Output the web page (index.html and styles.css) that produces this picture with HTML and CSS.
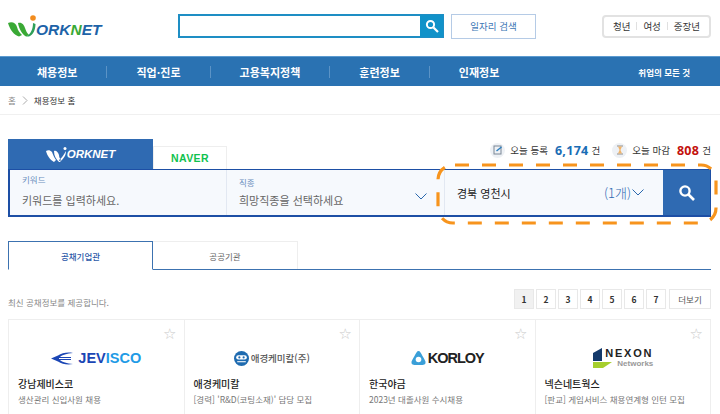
FILE: index.html
```html
<!DOCTYPE html>
<html lang="ko">
<head>
  <meta charset="UTF-8">
  <meta name="viewport" content="width=device-width, initial-scale=1.0">
  <title>워크넷 채용정보</title>
  <link rel="stylesheet" href="styles.css">
</head>
<body>
<header class="top">
  <a class="logo">
    <svg class="logo-mark" width="30" height="22" viewBox="0 0 30 22">
      <path d="M0 8 C4 6 8 8 9 12 C10 16 12 18 14 20 L11 21.5 C6 20 2 15 0 8Z" fill="#3aa935"/>
      <path d="M10 8 C14 7 16 10 17 13 C18 16 19 18 21 20 L18 21.5 C14 19 11 14 10 8Z" fill="#3aa935"/>
      <path d="M18 21.5 C23 19 25 14 25 8 L27.5 9 C27.5 15 25 20 21 21.5Z" fill="#2f9f58"/>
    </svg>
    <svg class="logo-dot" width="6" height="6" viewBox="0 0 6 6"><circle cx="3" cy="3" r="2.8" fill="#f28c1e"/></svg>
    <span class="logo-text">ORK<em>N</em>ET</span>
  </a>
  <div class="top-search">
    <div class="top-input"></div>
    <button class="top-btn">
      <svg width="14" height="14" viewBox="0 0 14 14" fill="none" stroke="#fff"><circle cx="5.5" cy="5.5" r="3.6" stroke-width="2"/><path d="M8.5 8.5 L13 13" stroke-width="2.2"/></svg>
    </button>
  </div>
  <a class="job-btn">일자리 검색</a>
  <div class="pills">
    <span>청년</span><i></i><span>여성</span><i></i><span>중장년</span>
  </div>
</header>

<nav class="gnb">
  <a>채용정보</a>
  <a>직업·진로</a>
  <a>고용복지정책</a>
  <a>훈련정보</a>
  <a class="last">인재정보</a>
  <span class="gnb-all">취업의 모든 것</span>
</nav>

<div class="crumb">
  <span>홈</span>
  <svg width="6" height="9" viewBox="0 0 6 9" fill="none" stroke="#aaa"><path d="M1 .5 L5 4.5 L1 8.5"/></svg>
  <b>채용정보 홈</b>
</div>

<main class="content">
  <div class="search-head">
    <div class="engine-tabs">
      <div class="engine on">
        <svg width="22" height="15" viewBox="0 0 22 15"><path d="M0 4 C2 3 4 3 6 5 C7 8 8 10 10 13 L8 15 C4 13 1 8 0 4Z M8 4 C10 3 12 5 13 8 C13 10 14 12 15 13 L13 15 C10 12 8 9 8 4Z M14 15 C17 12 20 9 20 4 C18 7 16 11 13 13Z" fill="#fff"/><circle cx="19" cy="1.5" r="1.5" fill="#fff"/></svg>
        <span>ORKNET</span>
      </div>
      <div class="engine naver">NAVER</div>
    </div>
    <div class="today">
      <span class="ico">
        <svg width="10" height="10" viewBox="0 0 10 10" fill="none"><rect x="1" y="1" width="7" height="8" stroke="#7a8796"/><path d="M3.5 6 L8.5 2" stroke="#2a7fc0" stroke-width="1.5"/></svg>
      </span>
      <span>오늘 등록</span><b class="blue">6,174</b><span>건</span>
      <span class="ico second">
        <svg width="10" height="10" viewBox="0 0 10 10" fill="none"><path d="M2 1 H8 M2 9 H8" stroke="#8d8d8d"/><path d="M3 1.5 H7 L5.5 5 L7 8.5 H3 L4.5 5Z" fill="#f2b56b"/></svg>
      </span>
      <span>오늘 마감</span><b class="red">808</b><span>건</span>
    </div>
  </div>

  <div class="search-box">
    <div class="field kw">
      <label>키워드</label>
      <p>키워드를 입력하세요.</p>
    </div>
    <div class="field job">
      <label>직종</label>
      <p>희망직종을 선택하세요</p>
      <svg class="chev" width="12" height="7" viewBox="0 0 12 7" fill="none" stroke="#2a68ae"><path d="M.5 .5 L6 6 L11.5 .5"/></svg>
    </div>
    <div class="field area">
      <strong>경북 영천시</strong>
      <span class="count">(1개)</span>
      <svg width="12" height="7" viewBox="0 0 12 7" fill="none" stroke="#2a68ae"><path d="M.5 .5 L6 6 L11.5 .5"/></svg>
    </div>
    <button class="go">
      <svg width="17" height="17" viewBox="0 0 17 17" fill="none" stroke="#fff"><circle cx="7" cy="7" r="4.6" stroke-width="2.4"/><path d="M10.5 10.5 L16 16" stroke-width="2.6"/></svg>
    </button>
    <svg class="dash" width="282" height="62" viewBox="0 0 282 62" fill="none"><rect x="2" y="2" width="278" height="58" rx="15" stroke="#f7941d" stroke-width="3.2" stroke-dasharray="14 13" stroke-dashoffset="-2"/></svg>
  </div>

  <div class="tabs">
    <a class="tab on">공채기업관</a>
    <a class="tab">공공기관</a>
  </div>

  <div class="list-head">
    <p>최신 공채정보를 제공합니다.</p>
    <div class="pager">
      <a class="on">1</a><a>2</a><a>3</a><a>4</a><a>5</a><a>6</a><a>7</a><a class="more">더보기</a>
    </div>
  </div>

  <div class="cards">
    <article class="card">
      <span class="star">☆</span>
      <div class="brand">
        <svg width="22" height="13" viewBox="0 0 22 13" fill="none"><path d="M0 6.5 L7 3.5 C11 1 16 0 22 1 C16 1.5 11 3 9 5 L20 5 L20 6 L8 6 L8 7 L20 7 L20 8 L9 8 C11 10 16 11.5 22 12 C16 13 11 12 7 9.5Z" fill="#1b46b5"/></svg>
        <span class="jev">JEV<em>ISCO</em></span>
      </div>
      <h3>강남제비스코</h3>
      <p>생산관리 신입사원 채용</p>
    </article>
    <article class="card">
      <span class="star">☆</span>
      <div class="brand tight">
        <svg width="15" height="15" viewBox="0 0 14 14"><circle cx="7" cy="7" r="7" fill="#1f6bb0"/><rect x="2" y="4" width="10" height="4" rx="2" fill="#fff"/><circle cx="5" cy="6" r="1" fill="#1f6bb0"/><circle cx="9" cy="6" r="1" fill="#1f6bb0"/><path d="M3 10 H11" stroke="#fff"/></svg>
        <span class="aek">애경케미칼(주)</span>
      </div>
      <h3>애경케미칼</h3>
      <p>[경력] 'R&amp;D(코팅소재)' 담당 모집</p>
    </article>
    <article class="card">
      <span class="star">☆</span>
      <div class="brand tight">
        <svg width="15" height="14" viewBox="0 0 15 14"><path d="M7.5 0 C9 0 10 2 11.5 5 C13 8 15 10 14.5 12 C14 14 12 14 7.5 14 C3 14 1 14 .5 12 C0 10 2 8 3.5 5 C5 2 6 0 7.5 0Z" fill="#3a9fd8"/><circle cx="7.5" cy="8.5" r="2.8" fill="#fff"/></svg>
        <span class="kor">KORLOY</span>
      </div>
      <h3>한국야금</h3>
      <p>2023년 대졸사원 수시채용</p>
    </article>
    <article class="card">
      <span class="star">☆</span>
      <div class="brand">
        <svg class="nex-mark" width="20" height="20" viewBox="0 0 20 20"><path d="M10 0 L10 13 L1 13 L1 5Z" fill="#143a6b"/><path d="M1 14 L20 14 L11 20 L1 20Z" fill="#a6cf2e"/></svg>
        <div class="nex"><b>NEXON</b><span>Networks</span></div>
      </div>
      <h3>넥슨네트웍스</h3>
      <p>[판교] 게임서비스 채용연계형 인턴 모집</p>
    </article>
  </div>
</main>
</body>
</html>
```

FILE: styles.css
```css
* {
  box-sizing: border-box;
}

html, body {
  height: 414px;
}

body {
  margin: 0;
  overflow: hidden;
  font-family: "Noto Sans CJK KR", "Noto Sans", sans-serif;
  color: #333;
  background: #fff;
}

p, h3 {
  margin: 0;
}

/* header */
.top {
  height: 56px;
  display: flex;
  align-items: center;
  padding: 0 9px 4px 8px;
}

.logo {
  position: relative;
  width: 170px;
  display: flex;
  align-items: flex-end;
  height: 22px;
}

.logo-dot {
  position: absolute;
  left: 22px;
  top: 0;
}

.logo-text {
  font: italic bold 15.5px "Liberation Sans", sans-serif;
  color: #1d63a8;
  margin-left: -2px;
  line-height: 14px;
}

.logo-text em {
  color: #3aa935;
}

.top-search {
  display: flex;
  width: 266px;
  height: 24px;
  border: 1px solid #1e8ec4;
}

.top-input {
  flex: 1;
  border: 1px solid #1e8ec4;
  border-right: 0;
}

.top-btn {
  width: 23px;
  padding: 0;
  border: 0;
  background: #1192c9;
  display: flex;
  align-items: center;
  justify-content: center;
}

.job-btn {
  margin-left: 7px;
  width: 85px;
  height: 25px;
  border: 1px solid #b5cbe6;
  color: #3d77b5;
  font-size: 9.5px;
  line-height: 23px;
  text-align: center;
}

.pills {
  margin-left: auto;
  width: 109px;
  height: 23px;
  border: 2px solid #e2e2e2;
  border-radius: 4px;
  display: flex;
  align-items: center;
  justify-content: center;
  gap: 6px;
  font-size: 9.5px;
  color: #333;
}

.pills i {
  width: 1px;
  height: 8px;
  background: #e0e0e0;
}

/* main menu */
.gnb {
  height: 30px;
  background: #2a72b2;
  border-top: 1px solid #5c9bd0;
  padding-left: 8px;
  display: flex;
  align-items: center;
  color: #fff;
}

.gnb a {
  padding: 0 29px;
  font-size: 11px;
  font-weight: 700;
  border-right: 1px solid #5b93c6;
  line-height: 12px;
}

.gnb a.last {
  border-right: 0;
}

.gnb-all {
  margin-left: auto;
  margin-right: 30px;
  font-size: 8.5px;
  font-weight: 700;
}

.crumb {
  height: 29px;
  padding-left: 8px;
  display: flex;
  align-items: center;
  gap: 6px;
  font-size: 8.5px;
  color: #888;
  border-bottom: 1px solid #f0f0f0;
}

.crumb b {
  font-weight: 400;
  color: #333;
}

/* search */
.content {
  padding: 24px 9px 0 8px;
}

.search-head {
  display: flex;
  justify-content: space-between;
  align-items: flex-end;
  height: 30px;
}

.engine-tabs {
  display: flex;
  align-items: flex-end;
  height: 30px;
}

.engine {
  height: 30px;
  width: 145px;
  background: #2f6ab2;
  display: flex;
  align-items: center;
  justify-content: center;
  color: #fff;
  font: italic bold 11.5px "Liberation Sans", sans-serif;
}

.engine span {
  margin-left: -1px;
}

.naver {
  width: 74px;
  height: 23px;
  background: #fff;
  border: 1px solid #eee;
  border-bottom: 0;
  color: #0fc24e;
  font: bold 10.5px "Liberation Sans", sans-serif;
  letter-spacing: .4px;
}

.today {
  display: flex;
  align-items: center;
  height: 22px;
  margin-bottom: 8px;
  font-size: 9.5px;
  color: #333;
}

.ico {
  width: 15px;
  height: 15px;
  border-radius: 50%;
  background: #eef1f5;
  display: flex;
  align-items: center;
  justify-content: center;
  margin-right: 5px;
}

.ico.second {
  margin-left: 12px;
}

.today b {
  font-size: 12.5px;
  font-weight: 700;
  font-family: "Open Sans", sans-serif;
  letter-spacing: .3px;
  margin: 0 3px 0 7px;
}

.blue {
  color: #1a6db5;
}

.red {
  color: #c3100c;
}

.search-box {
  position: relative;
  display: flex;
  height: 48px;
  border: 1px solid #1d4fa5;
  border-width: 1px 1px 2px 1px;
  border-left-width: 2px;
  background: #f6f9fd;
}

.field {
  position: relative;
  border-right: 1px solid #e2e8f2;
}

.field label {
  display: block;
  font-size: 8.5px;
  color: #6d8fbd;
}

.field p {
  font-size: 11px;
  color: #666;
}

.kw {
  width: 217px;
  padding: 3px 0 0 12px;
}

.kw p {
  margin-top: 7px;
}

.job {
  width: 218px;
  padding: 6px 0 0 12px;
}

.job p {
  margin-top: 4px;
}

.chev {
  position: absolute;
  right: 17px;
  top: 23px;
}

.area {
  width: 218px;
  padding: 0 19px 0 12px;
  display: flex;
  align-items: center;
  border-right: 0;
}

.area strong {
  font-weight: 400;
  font-size: 11px;
  color: #222;
}

.count {
  margin-left: auto;
  margin-right: 1px;
  font-size: 13px;
  font-weight: 300;
  color: #2f6ab2;
}

.go {
  flex: 1;
  padding: 0;
  border: 0;
  background: #2f6ab2;
  display: flex;
  align-items: center;
  justify-content: center;
}

.dash {
  position: absolute;
  left: 426px;
  top: -7px;
}

/* list */
.tabs {
  display: flex;
  margin-top: 24px;
  height: 29px;
  border-bottom: 1px solid #3c72b0;
}

.tab {
  width: 145px;
  font-size: 8.5px;
  line-height: 28px;
  text-align: center;
  color: #666;
  border: 1px solid #eee;
  border-left: 0;
  border-bottom: 0;
}

.tab.on {
  height: 29px;
  color: #2a58a8;
  font-weight: 500;
  background: #fff;
  border: 1px solid #3c72b0;
  border-bottom: 1px solid #fff;
}

.list-head {
  display: flex;
  justify-content: space-between;
  align-items: center;
  height: 50px;
  padding: 19px 0 10px;
  font-size: 8.5px;
  color: #888;
  border-bottom: 1px solid #eee;
}

.list-head p {
  margin-top: 6px;
}

.pager {
  display: flex;
  gap: 2px;
}

.pager a {
  width: 20px;
  height: 20px;
  border: 1px solid #e8e8e8;
  font-size: 8.5px;
  font-weight: 700;
  color: #333;
  line-height: 18px;
  text-align: center;
}

.pager a.on {
  background: #f1f1f1;
}

.pager a.more {
  margin-left: 1px;
  width: 42px;
  font-weight: 400;
  color: #555;
}

.cards {
  display: flex;
  height: 95px;
}

.card {
  position: relative;
  flex: 1;
  padding: 25px 0 0 9px;
  border-right: 1px solid #eee;
}

.card:first-child {
  border-left: 1px solid #eee;
}

.star {
  position: absolute;
  right: 7px;
  top: 6px;
  font: 15px/17px "DejaVu Sans", sans-serif;
  color: #c9c9c9;
}

.brand {
  height: 26px;
  margin-left: -9px;
  display: flex;
  align-items: center;
  justify-content: center;
  gap: 5px;
}

.brand.tight {
  gap: 2px;
}

.jev {
  font: bold 14.5px "Liberation Sans", sans-serif;
  color: #1b46b5;
}

.jev em {
  font-style: normal;
  color: #1f9be6;
}

.aek {
  font-size: 9.5px;
  font-weight: 500;
  color: #555;
}

.kor {
  font: bold 14.5px "Liberation Sans", sans-serif;
  letter-spacing: -1px;
  color: #222;
}

.nex-mark {
  margin-right: -12px;
}

.nex {
  display: flex;
  flex-direction: column;
  align-items: flex-end;
}

.nex b {
  font: bold 11px/11px "Liberation Sans", sans-serif;
  letter-spacing: 1.8px;
  color: #222;
}

.nex span {
  font: bold 8px/9px "Liberation Sans", sans-serif;
  color: #999;
}

.card h3 {
  margin-top: 6px;
  font-size: 10px;
  line-height: 14px;
  font-weight: 500;
  color: #222;
}

.card p {
  margin-top: 2px;
  font-size: 8.5px;
  line-height: 13px;
  color: #777;
}
```
